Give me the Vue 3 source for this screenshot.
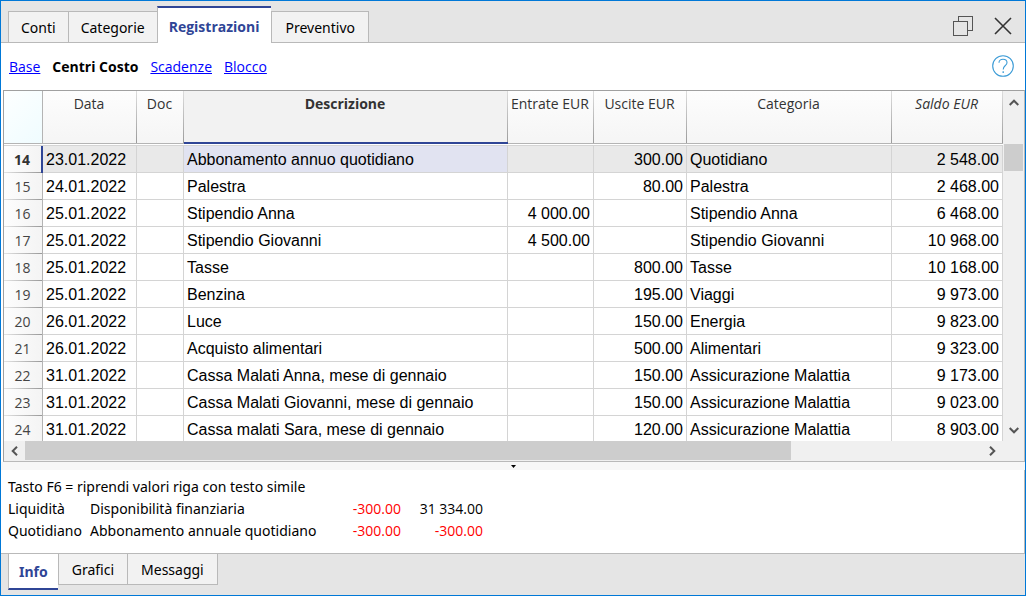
<script setup>
import { ref } from 'vue'

const views = ['Conti', 'Categorie', 'Registrazioni', 'Preventivo']
const activeView = ref('Registrazioni')

const layouts = ['Base', 'Centri Costo', 'Scadenze', 'Blocco']
const activeLayout = ref('Centri Costo')

const panels = ['Info', 'Grafici', 'Messaggi']
const activePanel = ref('Info')

const selectedRow = ref(14)

const rows = [
  { n: 14, date: '23.01.2022', text: 'Abbonamento annuo quotidiano', income: '', expense: '300.00', category: 'Quotidiano', balance: '2 548.00' },
  { n: 15, date: '24.01.2022', text: 'Palestra', income: '', expense: '80.00', category: 'Palestra', balance: '2 468.00' },
  { n: 16, date: '25.01.2022', text: 'Stipendio Anna', income: '4 000.00', expense: '', category: 'Stipendio Anna', balance: '6 468.00' },
  { n: 17, date: '25.01.2022', text: 'Stipendio Giovanni', income: '4 500.00', expense: '', category: 'Stipendio Giovanni', balance: '10 968.00' },
  { n: 18, date: '25.01.2022', text: 'Tasse', income: '', expense: '800.00', category: 'Tasse', balance: '10 168.00' },
  { n: 19, date: '25.01.2022', text: 'Benzina', income: '', expense: '195.00', category: 'Viaggi', balance: '9 973.00' },
  { n: 20, date: '26.01.2022', text: 'Luce', income: '', expense: '150.00', category: 'Energia', balance: '9 823.00' },
  { n: 21, date: '26.01.2022', text: 'Acquisto alimentari', income: '', expense: '500.00', category: 'Alimentari', balance: '9 323.00' },
  { n: 22, date: '31.01.2022', text: 'Cassa Malati Anna, mese di gennaio', income: '', expense: '150.00', category: 'Assicurazione Malattia', balance: '9 173.00' },
  { n: 23, date: '31.01.2022', text: 'Cassa Malati Giovanni, mese di gennaio', income: '', expense: '150.00', category: 'Assicurazione Malattia', balance: '9 023.00' },
  { n: 24, date: '31.01.2022', text: 'Cassa malati Sara, mese di gennaio', income: '', expense: '120.00', category: 'Assicurazione Malattia', balance: '8 903.00' },
]

const infoRows = [
  { account: 'Liquidità', text: 'Disponibilità finanziaria', change: '-300.00', total: '31 334.00' },
  { account: 'Quotidiano', text: 'Abbonamento annuale quotidiano', change: '-300.00', total: '-300.00' },
]

const isNegative = (value) => value.startsWith('-')
</script>

<template>
  <div class="window">
    <header class="titlebar">
      <nav class="tabs" aria-label="Tabelle">
        <button
          v-for="view in views"
          :key="view"
          type="button"
          class="tab"
          :class="{ active: view === activeView }"
          @click="activeView = view"
        >{{ view }}</button>
      </nav>
      <div class="window-actions">
        <button type="button" class="icon-button" aria-label="Ripristina">
          <svg width="20" height="20" viewBox="0 0 20 20" fill="none" stroke="#555" shape-rendering="crispEdges">
            <path d="M5.5 5V.5H19.5V14.5H15" />
            <rect x=".5" y="5.5" width="14" height="14" />
          </svg>
        </button>
        <button type="button" class="icon-button" aria-label="Chiudi">
          <svg width="18" height="18" viewBox="0 0 18 18" fill="none" stroke="#333" stroke-width="1.6">
            <path d="M1 1L17 17M17 1L1 17" />
          </svg>
        </button>
      </div>
    </header>

    <div class="toolbar">
      <nav class="layouts" aria-label="Viste">
        <a
          v-for="layout in layouts"
          :key="layout"
          href="#"
          :class="{ current: layout === activeLayout }"
          @click.prevent="activeLayout = layout"
        >{{ layout }}</a>
      </nav>
      <button type="button" class="icon-button" aria-label="Aiuto">
        <svg width="22" height="22" viewBox="0 0 22 22" fill="none" stroke="#3b9bd6">
          <circle cx="11" cy="11" r="10.3" stroke-width="1.1" />
          <path d="M7 7.7C7 5.5 8.8 4.3 11 4.3S15 5.5 15 7.7C15 10.6 11.2 10.5 11.2 14.4" stroke-width="1.1" />
          <path d="M11.2 16.2V18" stroke-width="1.3" />
        </svg>
      </button>
    </div>

    <main class="sheet">
      <div class="viewport">
        <table class="grid">
          <colgroup>
            <col class="c-num" />
            <col class="c-date" />
            <col class="c-doc" />
            <col />
            <col class="c-income" />
            <col class="c-expense" />
            <col class="c-category" />
            <col class="c-balance" />
          </colgroup>
          <thead>
            <tr>
              <th class="corner" aria-label="Riga"></th>
              <th>Data</th>
              <th>Doc</th>
              <th class="current">Descrizione</th>
              <th>Entrate EUR</th>
              <th>Uscite EUR</th>
              <th>Categoria</th>
              <th class="computed">Saldo EUR</th>
            </tr>
          </thead>
          <tbody>
            <tr
              v-for="row in rows"
              :key="row.n"
              :class="{ selected: row.n === selectedRow }"
              @click="selectedRow = row.n"
            >
              <th scope="row">{{ row.n }}</th>
              <td>{{ row.date }}</td>
              <td></td>
              <td class="text">{{ row.text }}</td>
              <td class="amount">{{ row.income }}</td>
              <td class="amount">{{ row.expense }}</td>
              <td>{{ row.category }}</td>
              <td class="amount">{{ row.balance }}</td>
            </tr>
          </tbody>
        </table>
      </div>
      <div class="vscroll">
        <button type="button" aria-label="Scorri su">
          <svg width="10" height="7" viewBox="0 0 10 7" fill="none" stroke="#555" stroke-width="2"><path d="M.7 6L5 1.7L9.3 6" /></svg>
        </button>
        <div class="vtrack"><div class="vthumb"></div></div>
        <button type="button" aria-label="Scorri giù">
          <svg width="10" height="7" viewBox="0 0 10 7" fill="none" stroke="#555" stroke-width="2"><path d="M.7 1L5 5.3L9.3 1" /></svg>
        </button>
      </div>
      <div class="hscroll">
        <button type="button" aria-label="Scorri a sinistra">
          <svg width="7" height="10" viewBox="0 0 7 10" fill="none" stroke="#555" stroke-width="2"><path d="M6 .7L1.7 5L6 9.3" /></svg>
        </button>
        <div class="htrack"><div class="hthumb"></div></div>
        <button type="button" aria-label="Scorri a destra">
          <svg width="7" height="10" viewBox="0 0 7 10" fill="none" stroke="#555" stroke-width="2"><path d="M1 .7L5.3 5L1 9.3" /></svg>
        </button>
      </div>
    </main>

    <div class="splitter">
      <svg width="5" height="3" viewBox="0 0 5 3"><path d="M0 0H5L2.5 3Z" fill="#000" /></svg>
    </div>

    <section class="info">
      <p>Tasto F6 = riprendi valori riga con testo simile</p>
      <table>
        <tbody>
          <tr v-for="item in infoRows" :key="item.account">
            <td class="i-account">{{ item.account }}</td>
            <td class="i-text">{{ item.text }}</td>
            <td class="i-amount" :class="{ negative: isNegative(item.change) }">{{ item.change }}</td>
            <td class="i-amount" :class="{ negative: isNegative(item.total) }">{{ item.total }}</td>
          </tr>
        </tbody>
      </table>
    </section>

    <footer class="panels">
      <button
        v-for="panel in panels"
        :key="panel"
        type="button"
        class="panel-tab"
        :class="{ active: panel === activePanel }"
        @click="activePanel = panel"
      >{{ panel }}</button>
    </footer>
  </div>
</template>

<style>
body {
  margin: 0;
}
</style>

<style scoped>
.window {
  box-sizing: border-box;
  display: flex;
  flex-direction: column;
  height: 100vh;
  border: 1px solid #0078d7;
  background: #fff;
  color: #000;
  font: 14px/20px "Open Sans", "Noto Sans", sans-serif;
}

button {
  box-sizing: border-box;
  margin: 0;
  padding: 0;
  border: 0;
  background: none;
  color: inherit;
  font: inherit;
}

.titlebar {
  display: flex;
  justify-content: space-between;
  height: 42px;
  background: linear-gradient(#b9b9b9, #b9b9b9) bottom / 100% 1px no-repeat #e5e5e5;
}

.tabs {
  display: flex;
  align-items: flex-end;
  padding-left: 7px;
}

.tab {
  height: 32px;
  padding: 2px 12px 0;
  border: 1px solid #b9b9b9;
  border-right-width: 0;
  background: #f2f2f2;
  font-family: "Noto Sans", "Open Sans", sans-serif;
}

.tab:last-child {
  padding: 2px 13px 0;
  border-right-width: 1px;
}

.tab.active {
  height: 37px;
  padding: 2px 12px 0 11px;
  border-top: 2px solid #2f4596;
  border-bottom: 0;
  background: #fff;
  color: #2f4596;
  font-family: inherit;
  font-weight: 700;
}

.window-actions {
  display: flex;
  align-items: center;
  gap: 21px;
  padding: 8px 13px 0 0;
}

.icon-button {
  display: flex;
}

.toolbar {
  display: flex;
  align-items: center;
  justify-content: space-between;
  height: 47px;
  padding: 0 11px 0 8px;
}

.toolbar .icon-button {
  padding-bottom: 2px;
}

.layouts {
  display: flex;
  gap: 12px;
}

.layouts a {
  color: #00f;
}

.layouts a.current {
  color: #000;
  font-weight: 700;
  text-decoration: none;
}

.sheet {
  flex: 1;
  display: grid;
  grid-template-columns: minmax(0, 1fr) 21px;
  grid-template-rows: minmax(0, 1fr) 20px;
  min-height: 0;
  margin-left: 2px;
  border: 1px solid #a0a0a0;
  border-right-color: #b9b9b9;
  border-bottom-color: #b9b9b9;
  background: #f0f0f0;
}

.viewport {
  overflow: hidden;
  background: #fff;
}

.grid {
  width: 100%;
  table-layout: fixed;
  border-collapse: separate;
  border-spacing: 0;
}

.c-num { width: 39px; }
.c-date { width: 94px; }
.c-doc { width: 47px; }
.c-income { width: 86px; }
.c-expense { width: 93px; }
.c-category { width: 205px; }
.c-balance { width: 111px; }

.grid th,
.grid td {
  box-sizing: border-box;
  overflow: hidden;
  white-space: nowrap;
}

.grid thead th {
  height: 55px;
  padding: 3px 2px 0 0;
  border-bottom: 1px solid #d4d4d4;
  background:
    linear-gradient(#fff, #fff) bottom / 100% 1px no-repeat,
    linear-gradient(#b4b4b4, #b4b4b4) 0 52px / 100% 1px no-repeat,
    linear-gradient(#ddd, #999) right / 1px 100% no-repeat,
    linear-gradient(#fdfdfd, #f5f5f5);
  color: #333;
  font-weight: 400;
  vertical-align: top;
}

.grid thead .corner {
  background:
    linear-gradient(#fff, #fff) bottom / 100% 1px no-repeat,
    linear-gradient(#b4b4b4, #b4b4b4) 0 52px / 100% 1px no-repeat,
    linear-gradient(#b4b4b4, #b4b4b4) right / 1px 100% no-repeat,
    linear-gradient(135deg, #fdffff, #effcff);
}

.grid thead .current {
  background:
    linear-gradient(#fff, #fff) bottom / 100% 1px no-repeat,
    linear-gradient(#2f4596, #2f4596) 0 51px / 100% 2px no-repeat,
    linear-gradient(#ddd, #999) right / 1px 100% no-repeat,
    #f2f2f2;
  font-weight: 700;
}

.grid thead .computed {
  font-style: italic;
}

.grid tbody th {
  height: 27px;
  padding: 0 1px 0 0;
  border-right: 1px solid #b4b4b4;
  background:
    linear-gradient(90deg, #e4e4e4, #999) bottom / 100% 1px no-repeat,
    linear-gradient(90deg, #fdfdfd, #f4f4f4);
  color: #444;
  font-size: 14px;
  font-weight: 400;
}

.grid tbody td {
  height: 27px;
  padding: 2px 3px 0;
  border-right: 1px solid #d4d4d4;
  border-bottom: 1px solid #d4d4d4;
  font: 16px/24px "Liberation Sans", Arial, sans-serif;
}

.grid tbody .amount {
  text-align: right;
}

.grid .selected td {
  background: #e9e9e9;
}

.grid .selected .text {
  background: #e1e3f1;
}

.grid tbody .selected th {
  border-right: 2px solid #2f4596;
  color: #333;
  font-weight: 700;
}

.vscroll {
  display: flex;
  flex-direction: column;
  padding: 0 1px;
}

.vscroll button {
  display: flex;
  align-items: center;
  justify-content: center;
  height: 22px;
}

.vtrack {
  flex: 1;
  padding-top: 31px;
}

.vthumb {
  height: 27px;
  background: #cdcdcd;
}

.hscroll {
  display: flex;
  grid-column: 1;
}

.hscroll button {
  display: flex;
  align-items: center;
  justify-content: center;
  width: 21px;
}

.htrack {
  flex: 1;
}

.hthumb {
  width: 80%;
  height: 19px;
  background: #cdcdcd;
}

.splitter {
  display: flex;
  justify-content: center;
  height: 5px;
  padding-top: 3px;
  background: #f7f7f7;
}

.info {
  height: 77px;
  padding: 6px 7px 0;
  border-bottom: 1px solid #b9b9b9;
  border-right: 1px solid #b9b9b9;
  font-family: "Noto Sans", "Open Sans", sans-serif;
  line-height: 22px;
}

.info p {
  margin: 0;
}

.info table {
  border-collapse: collapse;
}

.info td {
  padding: 0;
}

.i-account,
.i-amount {
  min-width: 82px;
}

.i-text {
  min-width: 229px;
}

.i-amount {
  font-family: "Open Sans", "Noto Sans", sans-serif;
  text-align: right;
}

.negative {
  color: #f00;
}

.panels {
  display: flex;
  align-items: flex-start;
  height: 41px;
  padding-left: 7px;
  background: #e5e5e5;
}

.panel-tab {
  height: 31px;
  padding: 2px 13px 0;
  border: 1px solid #b9b9b9;
  border-top: 0;
  border-right-width: 0;
  background: #f2f2f2;
  font-family: "Noto Sans", "Open Sans", sans-serif;
}

.panel-tab:last-child {
  border-right-width: 1px;
}

.panel-tab.active {
  height: 36px;
  padding: 2px 10px 0;
  border-bottom: 2px solid #2f4596;
  background: #fff;
  color: #2f4596;
  font-weight: 700;
}
</style>
